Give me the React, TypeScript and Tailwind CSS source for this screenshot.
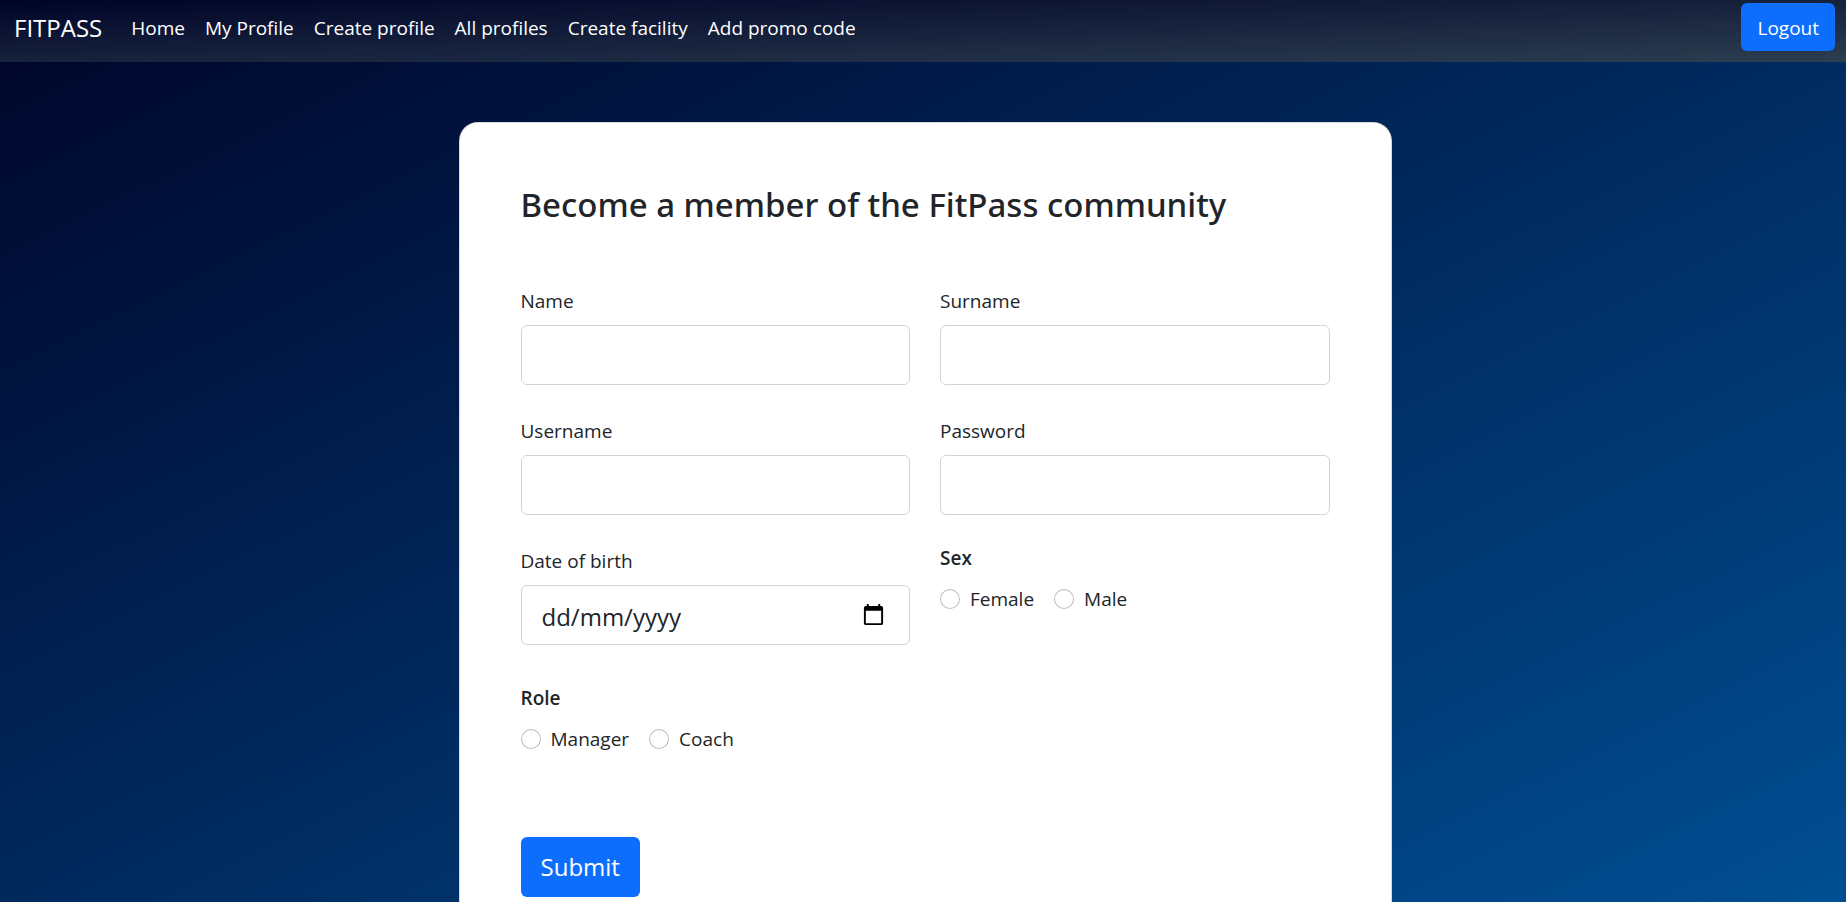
import type { InputHTMLAttributes } from "react";

const navLinks = ["Home", "My Profile", "Create profile", "All profiles", "Create facility", "Add promo code"];

const inputClass =
  "block h-[60px] w-full rounded-md border border-[#ced4da] bg-white px-5 pt-[2px] text-2xl text-[#212529] placeholder:text-[#212529] focus:border-[#86b7fe] focus:outline-none";

function NavBar() {
  return (
    <nav className="flex h-[62px] items-start justify-between bg-linear-to-br/srgb from-[#000428] to-[#2c3e50] pr-[11px] pl-[14px] text-white">
      <div className="flex h-14 items-center">
        <a href="#" className="mr-[29px] text-2xl">
          FITPASS
        </a>
        <ul className="flex gap-5 text-[19px]">
          {navLinks.map((link) => (
            <li key={link}>
              <a href="#">{link}</a>
            </li>
          ))}
        </ul>
      </div>
      <button type="button" className="mt-[3px] h-12 rounded-md bg-[#0d6efd] px-4 pt-[2px] text-[19px]">
        Logout
      </button>
    </nav>
  );
}

type FieldProps = InputHTMLAttributes<HTMLInputElement> & { id: string; label: string };

function Field({ id, label, ...rest }: FieldProps) {
  return (
    <div>
      <label htmlFor={id} className="mb-[9px] block text-[19px] leading-[30px]">
        {label}
      </label>
      <input id={id} name={id} className={inputClass} {...rest} />
    </div>
  );
}

function DateField() {
  return (
    <div>
      <label htmlFor="birth" className="mb-[9px] block text-[19px] leading-[30px]">
        Date of birth
      </label>
      <div className="relative">
        <input id="birth" name="birth" type="text" placeholder="dd/mm/yyyy" className={inputClass} />
        <button type="button" aria-label="Open calendar" className="absolute top-[18px] right-[25px]">
          <svg width="23" height="23" viewBox="0 0 24 24" fill="#000">
            <path d="M20 3h-1V1h-2v2H7V1H5v2H4c-1.1 0-2 .9-2 2v16c0 1.1.9 2 2 2h16c1.1 0 2-.9 2-2V5c0-1.1-.9-2-2-2zm0 18H4V8h16v13z" />
          </svg>
        </button>
      </div>
    </div>
  );
}

function RadioGroup({ name, title, options }: { name: string; title: string; options: string[] }) {
  return (
    <fieldset>
      <legend className="mb-[14px] text-[19px] leading-6 font-semibold">{title}</legend>
      <div className="flex gap-5">
        {options.map((option) => (
          <label key={option} className="flex items-center gap-[10px] text-[19px] leading-[30px]">
            <input
              type="radio"
              name={name}
              value={option}
              className="size-5 appearance-none rounded-full border border-black/25 bg-white checked:border-[6px] checked:border-[#0d6efd]"
            />
            {option}
          </label>
        ))}
      </div>
    </fieldset>
  );
}

export default function App() {
  return (
    <div className="min-h-screen bg-linear-to-br/srgb from-[#000428] to-[#004e92] bg-[length:100%_100vh] font-['Open_Sans',sans-serif] text-[#212529]">
      <NavBar />
      <main className="pt-[60px] pr-4 pb-[60px] pl-5">
        <section className="mx-auto max-w-[933px] rounded-[19px] border border-black/15 bg-white px-[61px] pt-[61px] pb-[61px]">
          <h1 className="mb-[60px] font-['Noto_Sans','Open_Sans',sans-serif] text-[33px] leading-[42px] font-medium">
            Become a member of the FitPass community
          </h1>
          <form>
            <div className="grid grid-cols-2 gap-x-[30px] gap-y-[31px]">
              <Field id="name" label="Name" type="text" />
              <Field id="surname" label="Surname" type="text" />
              <Field id="username" label="Username" type="text" />
              <Field id="password" label="Password" type="password" />
              <DateField />
              <RadioGroup name="sex" title="Sex" options={["Female", "Male"]} />
            </div>
            <div className="mt-[41px]">
              <RadioGroup name="role" title="Role" options={["Manager", "Coach"]} />
            </div>
            <button type="submit" className="mt-[83px] h-[60px] rounded-md bg-[#0d6efd] px-5 text-2xl text-white">
              Submit
            </button>
          </form>
        </section>
      </main>
    </div>
  );
}
